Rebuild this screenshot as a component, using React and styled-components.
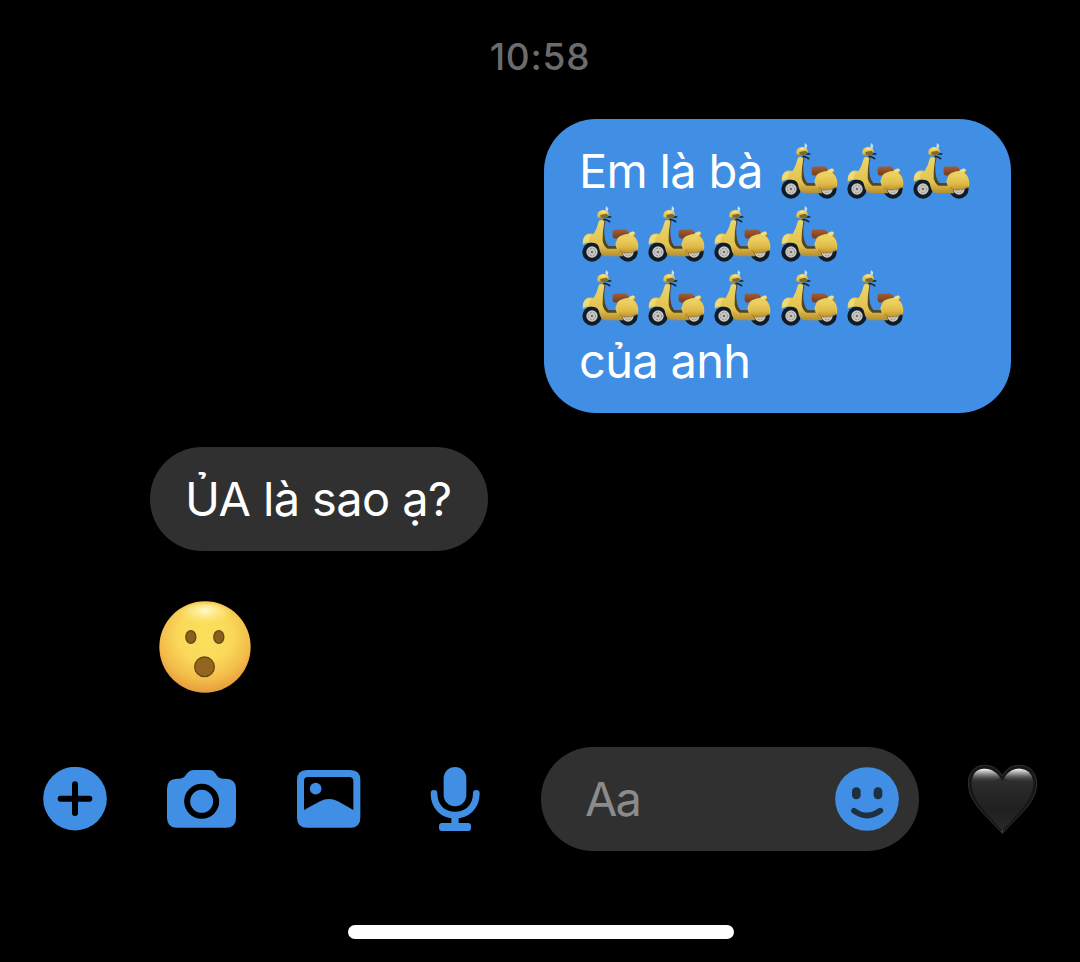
import React from "react";
import styled, { createGlobalStyle } from "styled-components";

const BLUE = "#418fe4";
const GREY = "#303030";

const GlobalStyle = createGlobalStyle`
  * { box-sizing: border-box; }
  html, body { margin: 0; padding: 0; background: #000; }
`;

const Screen = styled.main`
  width: 1080px;
  height: 962px;
  display: flex;
  flex-direction: column;
  background: #000;
  overflow: hidden;
  font-family: Inter, "Liberation Sans", sans-serif;
`;

const Timestamp = styled.time`
  padding-top: 33px;
  height: 119px;
  line-height: 48px;
  font-size: 37px;
  font-weight: 500;
  letter-spacing: 0.8px;
  text-align: center;
  color: #6c6c6c;
`;

const Thread = styled.section`
  height: 628px;
  padding: 0 69px 0 150px;
  display: flex;
  flex-direction: column;
  align-items: flex-start;
`;

const Bubble = styled.div`
  align-self: ${(p) => (p.$mine ? "flex-end" : "flex-start")};
  width: ${(p) => (p.$mine ? 467 : 337.5)}px;
  height: ${(p) => (p.$mine ? 294 : 104)}px;
  margin-bottom: ${(p) => (p.$mine ? 34 : 50)}px;
  padding: 20px 36px;
  border-radius: 52px;
  background: ${(p) => (p.$mine ? BLUE : GREY)};
  color: #fff;
`;

const Line = styled.div`
  display: flex;
  height: 63.3px;
  line-height: 63.3px;
  font-size: 47px;
  letter-spacing: ${(p) => p.$tracking || 0}px;
  white-space: pre;
`;

const Words = styled.span`
  flex: none;
  min-width: ${(p) => p.$width || 0}px;
  text-indent: -1px;
`;

const ScooterSvg = styled.svg`
  flex: none;
  display: block;
  width: 66.2px;
  height: 63.3px;
`;

const FaceSvg = styled.svg`
  display: block;
  width: 92px;
  height: 92px;
  margin-left: 9px;
`;

const Composer = styled.footer`
  display: flex;
  align-items: center;
  height: 104px;
  padding-left: 43px;
`;

const Icon = styled.svg`
  flex: none;
  display: block;
  width: ${(p) => p.$w}px;
  height: 64px;
  margin-right: ${(p) => p.$gap || 0}px;
`;

const Field = styled.div`
  flex: none;
  display: flex;
  align-items: center;
  justify-content: space-between;
  width: 377.5px;
  height: 104px;
  margin-right: 47.5px;
  padding: 0 20px 0 43.5px;
  border-radius: 52px;
  background: ${GREY};
`;

const Placeholder = styled.span`
  font-size: 47px;
  line-height: 60px;
  letter-spacing: -1.8px;
  color: #8b8b8b;
`;

const HeartSvg = styled.svg`
  flex: none;
  display: block;
  width: 72px;
  height: 72px;
`;

const HomeIndicator = styled.div`
  width: 386px;
  height: 14.5px;
  margin: 73.5px 0 0 347.5px;
  border-radius: 8px;
  background: #fff;
`;

const Gradients = styled.svg`
  position: absolute;
  width: 0;
  height: 0;
`;

function Defs() {
  return (
    <Gradients aria-hidden="true">
      <defs>
        <linearGradient id="body" x1="0" y1="0" x2="0" y2="1">
          <stop offset="0" stopColor="#ecd568" />
          <stop offset="0.7" stopColor="#e2c250" />
          <stop offset="1" stopColor="#b58d2c" />
        </linearGradient>
        <linearGradient id="cowl" x1="0" y1="0" x2="0" y2="1">
          <stop offset="0" stopColor="#eed463" />
          <stop offset="0.6" stopColor="#e0bb49" />
          <stop offset="1" stopColor="#bd922e" />
        </linearGradient>
        <linearGradient id="seat" x1="0" y1="0" x2="0" y2="1">
          <stop offset="0" stopColor="#a55e35" />
          <stop offset="1" stopColor="#743b1d" />
        </linearGradient>
      </defs>
    </Gradients>
  );
}

function Wheel({ cx }) {
  return (
    <g>
      <circle cx={cx} cy="178" r="29" fill="#111b25" />
      <circle cx={cx} cy="178" r="17" fill="#c9c8c6" />
      <circle cx={cx} cy="178" r="11" fill="none" stroke="#8b8885" strokeWidth="3" strokeDasharray="5 4" />
      <circle cx={cx} cy="178" r="4" fill="#77716c" />
    </g>
  );
}

function Scooter() {
  return (
    <ScooterSvg viewBox="29 28 198.6 190" role="img" aria-label="Scooter">
      <Wheel cx={173} />
      <Wheel cx={65} />
      <path d="M101 79 Q114 83 118 87 M103 72 L121 73" fill="none" stroke="#17202b" strokeWidth="5" strokeLinecap="round" />
      <path d="M93 84 L106 82 L102 104 Q100 146 114 160 L143 161 L143 172 L108 174 L91 146 Z" fill="#514621" />
      <path d="M86 84 Q94 79 102 86 L100 101 Q97 117 97 145 Q101 163 112 168 L150 168 L159 191 L104 191 Q91 187 88 173 Q86 154 72 151 Q55 147 37 156 Q36 134 47 126 Q55 121 70 124 Q80 108 86 84 Z" fill="url(#body)" />
      <path d="M38 151 Q38 130 51 126 L63 126 Q56 134 54 148 Z" fill="#efe083" opacity="0.8" />
      <path d="M81 69 Q81 53 99 51 L113 57 L116 69 L105 76 Q92 81 81 74 Z" fill="url(#body)" />
      <path d="M107 40 L114 47 L111 58 L105 53 Z" fill="#bfe2ee" />
      <path d="M90 67 L108 63 L116 69 L104 76 L91 75 Z" fill="#7d6a2a" />
      <path d="M92 59 L106 56" stroke="#f6eaa0" strokeWidth="4" />
      <path d="M127 120 Q125 110 138 111 L163 110 Q173 112 176 123 L162 132 L145 138 L130 137 Q125 131 127 120 Z" fill="url(#seat)" />
      <path d="M142 136 Q154 125 175 124 L188 119 Q197 121 194 133 Q207 149 203 171 Q196 178 186 177 Q181 168 171 168 Q160 168 155 179 L146 184 L141 176 L135 154 Z" fill="url(#body)" />
      <path d="M145 147 Q151 134 170 133 Q189 132 198 145 Q205 158 198 173 Q179 184 154 180 Q139 168 145 147 Z" fill="url(#cowl)" />
      <path d="M147 173 Q158 183 178 180 Q193 178 199 171" fill="none" stroke="#a67c2d" strokeWidth="2.500" />
      <path d="M174 122 L188 116 L194 120 L190 127 L180 128 Z" fill="#f0df86" />
      <path d="M190 125 L196 126 L196 132 L191 133 Z" fill="#9c7940" />
    </ScooterSvg>
  );
}

function Scooters({ count }) {
  return Array.from({ length: count }, (_, i) => <Scooter key={i} />);
}

function SurprisedFace() {
  return (
    <FaceSvg viewBox="57 482 276 276" role="img" aria-label="Surprised face">
      <defs>
        <radialGradient id="faceFill" gradientUnits="userSpaceOnUse" cx="195" cy="585" r="178">
          <stop offset="0" stopColor="#fbe05c" />
          <stop offset="0.45" stopColor="#fad95a" />
          <stop offset="0.75" stopColor="#f3bd4a" />
          <stop offset="1" stopColor="#e4963a" />
        </radialGradient>
        <radialGradient id="faceShine" cx="0.5" cy="0.3" r="0.55">
          <stop offset="0" stopColor="#fffad0" />
          <stop offset="1" stopColor="#ffec80" stopOpacity="0" />
        </radialGradient>
      </defs>
      <circle cx="195" cy="620" r="137" fill="url(#faceFill)" />
      <ellipse cx="195" cy="526" rx="78" ry="36" fill="url(#faceShine)" />
      <g fill="#86601f" stroke="#6b4813" strokeWidth="4">
        <ellipse cx="152.500" cy="590" rx="15" ry="19" />
        <ellipse cx="236.500" cy="590" rx="15" ry="19" />
        <circle cx="193.500" cy="679.500" r="29.500" fill="#926621" />
      </g>
    </FaceSvg>
  );
}

function BlackHeart() {
  return (
    <HeartSvg viewBox="50 38 216 216" role="img" aria-label="Black heart">
      <defs>
        <linearGradient id="heartFill" x1="0" y1="0" x2="0" y2="1">
          <stop offset="0" stopColor="#383838" />
          <stop offset="0.3" stopColor="#292929" />
          <stop offset="0.65" stopColor="#202020" />
          <stop offset="1" stopColor="#292929" />
        </linearGradient>
        <linearGradient id="heartShine" x1="0" y1="0" x2="0" y2="1">
          <stop offset="0" stopColor="#fff" />
          <stop offset="0.4" stopColor="#aaa" stopOpacity="0.75" />
          <stop offset="1" stopColor="#333" stopOpacity="0" />
        </linearGradient>
      </defs>
      <path d="M159 77 C145 50 121 44 102 45 C72 47 56 72 57 100 C58 159 116 200 159 250 C202 200 262 159 262 100 C262 69 244 47 215 45 C190 44 172 52 159 77 Z" fill="#171717" stroke="#303030" strokeWidth="3" />
      <path d="M159 93 C148 64 125 54 104 55 C77 56 66 77 67 101 C68 154 123 197 159 242 C196 197 251 154 252 101 C253 76 240 57 214 55 C191 53 169 66 159 93 Z" fill="url(#heartFill)" />
      <path d="M69 91 Q71 57 104 55 C127 54 144 68 153 84 Q110 104 69 91 Z M165 84 C174 65 192 54 214 55 Q247 58 250 91 Q207 104 165 84 Z" fill="url(#heartShine)" />
      <path d="M159 245 L159 240" stroke="#555" strokeWidth="3" strokeLinecap="round" />
    </HeartSvg>
  );
}

export default function App() {
  return (
    <Screen>
      <GlobalStyle />
      <Defs />
      <Timestamp>10:58</Timestamp>
      <Thread>
        <Bubble $mine>
          <Line $tracking={-0.7}>
            <Words $width={199}>Em là bà </Words>
            <Scooters count={3} />
          </Line>
          <Line><Scooters count={4} /></Line>
          <Line><Scooters count={5} /></Line>
          <Line $tracking={-0.7}><Words>của anh</Words></Line>
        </Bubble>
        <Bubble>
          <Line $tracking={-0.6}><Words>ỦA là sao ạ?</Words></Line>
        </Bubble>
        <SurprisedFace />
      </Thread>
      <Composer>
        <Icon $w={64} $gap={60} viewBox="39 51 192 192">
          <circle cx="135" cy="146" r="95.500" fill={BLUE} />
          <path d="M135 103 V189 M92 146 H178" stroke="#000" strokeWidth="18" strokeLinecap="round" />
        </Icon>
        <Icon $w={69} $gap={60.7} viewBox="411 51 207 192">
          <path d="M441 86 H448 C460 86 464 80 469 73 Q478 60 492 60 H537 Q551 60 558 73 C563 81 568 86 579 86 H588 Q618 87 618 117 V203 Q618 233 588 233 H441 Q411 233 411 203 V116 Q411 86 441 86 Z" fill={BLUE} />
          <circle cx="515" cy="154" r="43.500" fill="none" stroke="#000" strokeWidth="18" />
        </Icon>
        <Icon $w={64} $gap={69.3} viewBox="50 51 192 192">
          <path fillRule="evenodd" d="M80 60 H210 Q240 60 240 90 V203 Q240 233 210 233 H80 Q50 233 50 203 V90 Q50 60 80 60 Z M83 81 Q71 81 71 93 V180 L119 154 Q146 140 173 154 L219 180 V93 Q219 81 207 81 Z" fill={BLUE} />
          <circle cx="106" cy="116" r="17.500" fill={BLUE} />
        </Icon>
        <Icon $w={50} $gap={61.5} viewBox="450 51 150 192">
          <rect x="491" y="51" width="68" height="118" rx="34" fill={BLUE} />
          <path d="M462 130 C462 171 489 195 525 195 C561 195 589 171 589 130" fill="none" stroke={BLUE} strokeWidth="20" strokeLinecap="round" />
          <path d="M514 196 H536 V220 H514 Z" fill={BLUE} />
          <rect x="477" y="219" width="96" height="24" rx="9" fill={BLUE} />
        </Icon>
        <Field>
          <Placeholder>Aa</Placeholder>
          <Icon $w={64} viewBox="914 80 192 192">
            <circle cx="1010" cy="176" r="95.500" fill={BLUE} />
            <g fill="#1d3042">
              <rect x="965" y="141" width="26" height="36" rx="12.500" />
              <rect x="1030" y="141" width="26" height="36" rx="12.500" />
            </g>
            <path d="M971 211 Q1010 240 1050 211" fill="none" stroke="#1d3042" strokeWidth="17" strokeLinecap="round" />
          </Icon>
        </Field>
        <BlackHeart />
      </Composer>
      <HomeIndicator />
    </Screen>
  );
}
